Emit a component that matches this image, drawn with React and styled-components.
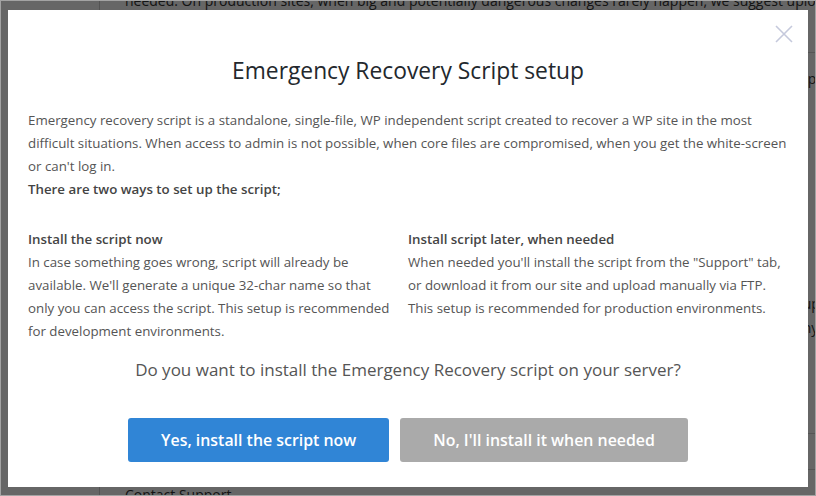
import React from 'react';
import styled, { createGlobalStyle } from 'styled-components';

const GlobalStyle = createGlobalStyle`
  html, body {
    margin: 0;
    padding: 0;
    height: 100%;
    overflow: hidden;
    background: #fff;
    font-family: "Open Sans", "Noto Sans", sans-serif;
  }
  #root {
    height: 100%;
  }
`;

/* page behind the dialog */
const Page = styled.div`
  display: grid;
  grid-template-columns: 100px 1fr;
  height: 100%;
`;

const Sidebar = styled.aside`
  border-right: 1px solid #cfcfcf;
`;

const Content = styled.main`
  padding-left: 25px;
  margin-top: -11px;
  color: #333;
  font-size: 14px;
  line-height: 24px;
  white-space: nowrap;
  overflow: hidden;
`;

const BackLine = styled.p`
  margin: 0;
  margin-top: ${(p) => p.$gap || 0}px;
  text-indent: ${(p) => p.$indent || 0}px;
`;

const Rule = styled.hr`
  border: 0;
  border-top: 1px solid #d5d5d5;
  margin: ${(p) => p.$gap || 0}px -30px 0 -30px;
`;

/* dialog */
const Overlay = styled.div`
  position: fixed;
  inset: 0;
  background: rgba(0, 0, 0, 0.6);
  display: flex;
  align-items: flex-start;
  padding: 10px 0 0 8px;
`;

const Frame = styled.div`
  position: fixed;
  inset: 0;
  border: 1px solid #a3a3a3;
  pointer-events: none;
`;

const Modal = styled.div`
  position: relative;
  box-sizing: border-box;
  width: 800px;
  height: 477px;
  background: #fff;
  padding: 46px 20px 0;
  display: flex;
  flex-direction: column;
`;

const Close = styled.button`
  position: absolute;
  top: 15px;
  right: 15px;
  width: 18px;
  height: 18px;
  padding: 0;
  border: 0;
  background: none;
  cursor: pointer;
  svg {
    display: block;
  }
`;

const Title = styled.h2`
  margin: 0;
  text-align: center;
  font-size: 22.8px;
  line-height: 30px;
  font-weight: 500;
  color: #23282d;
`;

const Intro = styled.p`
  margin: 23px -8px 0 0;
  font-size: 13.3px;
  line-height: 23px;
  color: #555;
  strong {
    font-weight: 600;
    color: #444;
  }
`;

const Columns = styled.div`
  display: grid;
  grid-template-columns: 380px 380px;
  margin-top: 27px;
`;

const Column = styled.div`
  padding-right: ${(p) => (p.$first ? 12 : 0)}px;
  font-size: 13.3px;
  line-height: 23px;
  color: #555;
  h4 {
    margin: 0;
    font-size: 13.3px;
    font-weight: 600;
    color: #444;
  }
  p {
    margin: 0;
  }
`;

const Question = styled.p`
  margin: 14px 0 0;
  text-align: center;
  font-size: 17px;
  line-height: 26px;
  color: #555;
`;

const Actions = styled.div`
  display: flex;
  justify-content: center;
  gap: 11px;
  margin-top: 35px;
`;

const Button = styled.button`
  height: 44px;
  padding: 0 33px;
  border: 0;
  border-radius: 3px;
  background: ${(p) => (p.$primary ? '#3085d6' : '#aaaaaa')};
  color: #fff;
  font-family: inherit;
  font-size: 15.9px;
  font-weight: 600;
  cursor: pointer;
`;

function CloseIcon() {
  return (
    <svg width="18" height="18" viewBox="0 0 18 18">
      <path d="M1 1 L17 17 M17 1 L1 17" stroke="#c5c9dc" strokeWidth="1.6" fill="none" />
    </svg>
  );
}

export default function App() {
  return (
    <>
      <GlobalStyle />
      <Page>
        <Sidebar />
        <Content>
          <BackLine>
            needed. On production sites, when big and potentially dangerous changes rarely happen, we suggest uploading
          </BackLine>
          <Rule $gap={39} />
          <BackLine $gap={14} $indent={660}>
            script is installed only
          </BackLine>
          <BackLine $gap={201} $indent={670}>
            Support tab for more info
          </BackLine>
          <BackLine $indent={670}>
            any script is available
          </BackLine>
          <Rule $gap={93} />
          <Rule $gap={35} />
          <BackLine $gap={13}>Contact Support</BackLine>
        </Content>
      </Page>
      <Overlay>
        <Modal>
          <Close aria-label="Close">
            <CloseIcon />
          </Close>
          <Title>Emergency Recovery Script setup</Title>
          <Intro>
            Emergency recovery script is a standalone, single-file, WP independent script created to recover a WP site in the
            most difficult situations. When access to admin is not possible, when core files are compromised, when you get the
            white-screen or can't log in.
            <br />
            <strong>There are two ways to set up the script;</strong>
          </Intro>
          <Columns>
            <Column $first>
              <h4>Install the script now</h4>
              <p>
                In case something goes wrong, script will already be available. We'll generate a unique 32-char name so that
                only you can access the script. This setup is recommended for development environments.
              </p>
            </Column>
            <Column>
              <h4>Install script later, when needed</h4>
              <p>
                When needed you'll install the script from the "Support" tab, or download it from our site and upload manually
                via FTP. This setup is recommended for production environments.
              </p>
            </Column>
          </Columns>
          <Question>Do you want to install the Emergency Recovery script on your server?</Question>
          <Actions>
            <Button $primary>Yes, install the script now</Button>
            <Button>No, I'll install it when needed</Button>
          </Actions>
        </Modal>
      </Overlay>
      <Frame />
    </>
  );
}
